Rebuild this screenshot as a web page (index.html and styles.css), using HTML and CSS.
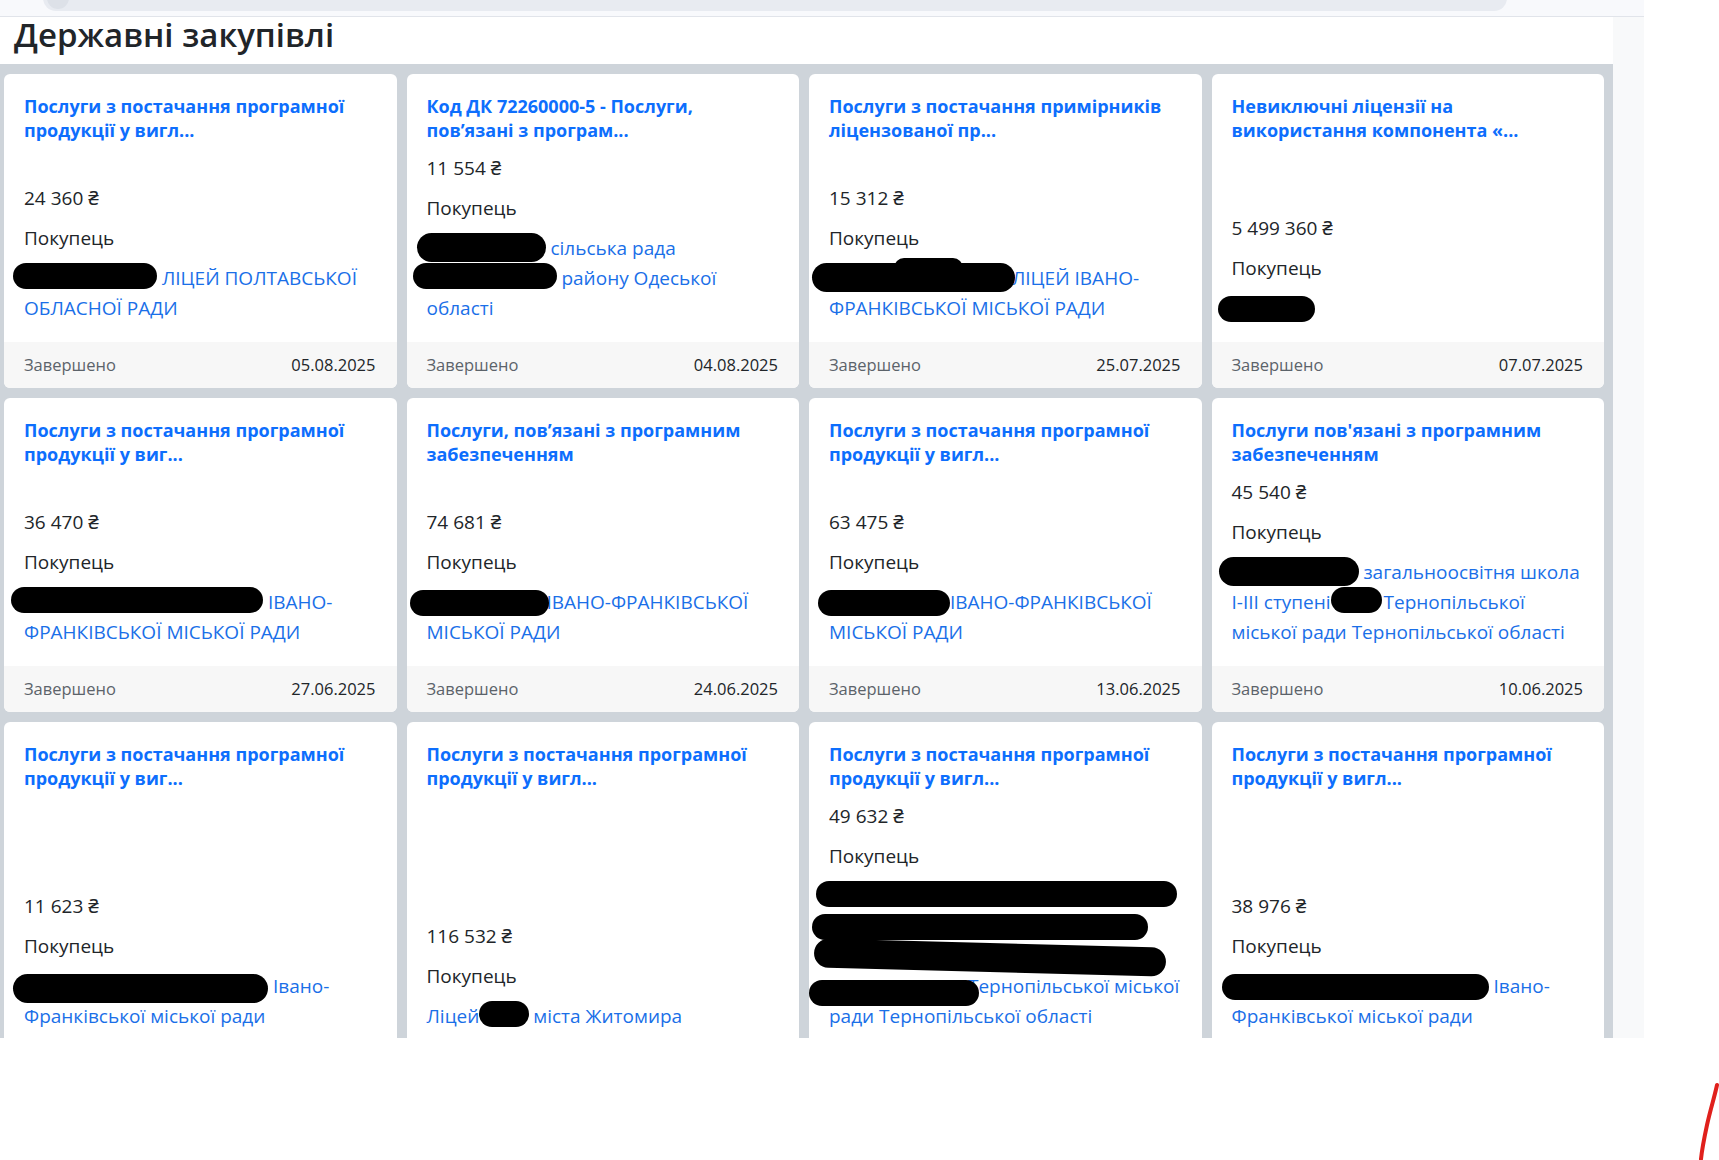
FILE: index.html
```html
<!DOCTYPE html>
<html lang="uk">
<head>
  <meta charset="UTF-8">
  <meta name="viewport" content="width=device-width, initial-scale=1.0">
  <title>Державні закупівлі</title>
  <link rel="stylesheet" href="styles.css">
</head>
<body>
  <div class="screen">
    <div class="topbar">
      <div class="search"><span class="search-btn"></span></div>
    </div>

    <div class="viewport">
      <main class="main">
        <h1 class="page-title">Державні закупівлі</h1>

        <div class="tenders">
          <!-- ряд 1 -->
          <article class="tender">
            <div class="tender-body">
              <a class="tender-title" href="#">Послуги з постачання програмної продукції у вигл...</a>
              <div class="tender-info">
                <p class="tender-amount">24&nbsp;360&nbsp;₴</p>
                <p class="tender-label">Покупець</p>
                <a class="tender-buyer" href="#"><span class="redact" style="width:144px;margin-left:-11px"></span> ЛІЦЕЙ ПОЛТАВСЬКОЇ ОБЛАСНОЇ РАДИ</a>
              </div>
            </div>
            <div class="tender-footer"><span class="status">Завершено</span><span>05.08.2025</span></div>
          </article>

          <article class="tender">
            <div class="tender-body">
              <a class="tender-title" href="#">Код ДК 72260000-5 - Послуги, пов’язані з програм...</a>
              <div class="tender-info">
                <p class="tender-amount">11&nbsp;554&nbsp;₴</p>
                <p class="tender-label">Покупець</p>
                <a class="tender-buyer" href="#"><span class="redact tall" style="width:129px;margin-left:-10px"></span> сільська рада <span class="redact" style="width:144px;margin-left:-14px"></span> району Одеської області</a>
              </div>
            </div>
            <div class="tender-footer"><span class="status">Завершено</span><span>04.08.2025</span></div>
          </article>

          <article class="tender">
            <div class="tender-body">
              <a class="tender-title" href="#">Послуги з постачання примірників ліцензованої пр...</a>
              <div class="tender-info">
                <p class="tender-amount">15&nbsp;312&nbsp;₴</p>
                <p class="tender-label">Покупець</p>
                <a class="tender-buyer" href="#"><span class="redact tall bump" style="width:203px;margin:0 -8px 0 -17px"></span> ЛІЦЕЙ ІВАНО-ФРАНКІВСЬКОЇ МІСЬКОЇ РАДИ</a>
              </div>
            </div>
            <div class="tender-footer"><span class="status">Завершено</span><span>25.07.2025</span></div>
          </article>

          <article class="tender">
            <div class="tender-body">
              <a class="tender-title" href="#">Невиключні ліцензії на використання компонента «...</a>
              <div class="tender-info">
                <p class="tender-amount">5&nbsp;499&nbsp;360&nbsp;₴</p>
                <p class="tender-label">Покупець</p>
                <a class="tender-buyer" href="#"><span class="redact down" style="width:97px;margin-left:-14px"></span></a>
              </div>
            </div>
            <div class="tender-footer"><span class="status">Завершено</span><span>07.07.2025</span></div>
          </article>

          <!-- ряд 2 -->
          <article class="tender">
            <div class="tender-body">
              <a class="tender-title" href="#">Послуги з постачання програмної продукції у виг...</a>
              <div class="tender-info">
                <p class="tender-amount">36&nbsp;470&nbsp;₴</p>
                <p class="tender-label">Покупець</p>
                <a class="tender-buyer" href="#"><span class="redact" style="width:252px;margin-left:-13px"></span> ІВАНО-ФРАНКІВСЬКОЇ МІСЬКОЇ РАДИ</a>
              </div>
            </div>
            <div class="tender-footer"><span class="status">Завершено</span><span>27.06.2025</span></div>
          </article>

          <article class="tender">
            <div class="tender-body">
              <a class="tender-title" href="#">Послуги, пов’язані з програмним забезпеченням</a>
              <div class="tender-info">
                <p class="tender-amount">74&nbsp;681&nbsp;₴</p>
                <p class="tender-label">Покупець</p>
                <a class="tender-buyer" href="#"><span class="redact down" style="width:139px;margin:0 -7px 0 -17px"></span> ІВАНО-ФРАНКІВСЬКОЇ МІСЬКОЇ РАДИ</a>
              </div>
            </div>
            <div class="tender-footer"><span class="status">Завершено</span><span>24.06.2025</span></div>
          </article>

          <article class="tender">
            <div class="tender-body">
              <a class="tender-title" href="#">Послуги з постачання програмної продукції у вигл...</a>
              <div class="tender-info">
                <p class="tender-amount">63&nbsp;475&nbsp;₴</p>
                <p class="tender-label">Покупець</p>
                <a class="tender-buyer" href="#"><span class="redact down" style="width:132px;margin:0 -5px 0 -11px"></span> ІВАНО-ФРАНКІВСЬКОЇ МІСЬКОЇ РАДИ</a>
              </div>
            </div>
            <div class="tender-footer"><span class="status">Завершено</span><span>13.06.2025</span></div>
          </article>

          <article class="tender">
            <div class="tender-body">
              <a class="tender-title" href="#">Послуги пов'язані з програмним забезпеченням</a>
              <div class="tender-info">
                <p class="tender-amount">45&nbsp;540&nbsp;₴</p>
                <p class="tender-label">Покупець</p>
                <a class="tender-buyer" href="#"><span class="redact tall" style="width:140px;margin-left:-13px"></span> загальноосвітня школа І-ІІІ ступені<span class="redact" style="width:51px;margin-right:-3px"></span> Тернопільської міської ради Тернопільської області</a>
              </div>
            </div>
            <div class="tender-footer"><span class="status">Завершено</span><span>10.06.2025</span></div>
          </article>

          <!-- ряд 3 -->
          <article class="tender">
            <div class="tender-body">
              <a class="tender-title" href="#">Послуги з постачання програмної продукції у виг...</a>
              <div class="tender-info">
                <p class="tender-amount">11&nbsp;623&nbsp;₴</p>
                <p class="tender-label">Покупець</p>
                <a class="tender-buyer" href="#"><span class="redact tall down" style="width:255px;margin-left:-11px"></span> Івано-Франківської міської ради</a>
              </div>
            </div>
          </article>

          <article class="tender">
            <div class="tender-body">
              <a class="tender-title" href="#">Послуги з постачання програмної продукції у вигл...</a>
              <div class="tender-info">
                <p class="tender-amount">116&nbsp;532&nbsp;₴</p>
                <p class="tender-label">Покупець</p>
                <a class="tender-buyer" href="#">Ліцей<span class="redact" style="width:50px;margin-right:-1px"></span> міста Житомира</a>
              </div>
            </div>
          </article>

          <article class="tender">
            <div class="tender-body">
              <a class="tender-title" href="#">Послуги з постачання програмної продукції у вигл...</a>
              <div class="tender-info">
                <p class="tender-amount">49&nbsp;632&nbsp;₴</p>
                <p class="tender-label">Покупець</p>
                <a class="tender-buyer" href="#"><span class="redact" style="width:361px;margin-left:-13px"></span> <span class="redact down" style="width:336px;margin-left:-17px"></span> <span class="redact tall down tilt" style="width:352px;margin-left:-15px"></span> <span class="redact down-more" style="width:170px;margin:0 -16px 0 -20px"></span> Тернопільської міської ради Тернопільської області</a>
              </div>
            </div>
          </article>

          <article class="tender">
            <div class="tender-body">
              <a class="tender-title" href="#">Послуги з постачання програмної продукції у вигл...</a>
              <div class="tender-info">
                <p class="tender-amount">38&nbsp;976&nbsp;₴</p>
                <p class="tender-label">Покупець</p>
                <a class="tender-buyer" href="#"><span class="redact down" style="width:267px;margin-left:-10px"></span> Івано-Франківської міської ради</a>
              </div>
            </div>
          </article>
        </div>
      </main>
      <div class="scroll-strip"></div>
    </div>

    <svg class="pen-mark" width="30" height="80" viewBox="0 0 30 80">
      <path d="M27 4 C 25 14, 20 30, 17 44 S 12 68, 11 78" fill="none" stroke="#e0201c" stroke-width="4" stroke-linecap="round"/>
    </svg>
  </div>
</body>
</html>
```

FILE: styles.css
```css
* {
  box-sizing: border-box;
}

body {
  margin: 0;
  background-color: #fff;
  font-family: "Open Sans", "Noto Sans", "DejaVu Sans", sans-serif;
  color: #212529;
}

.screen {
  position: relative;
  width: 1719px;
  height: 1160px;
  overflow: hidden;
}

/* Верхня панель (обрізана) */
.topbar {
  width: 1644px;
  height: 17px;
  background-color: #f8f9fc;
  border-bottom: 1px solid #e1e4ea;
  overflow: hidden;
}
.search {
  display: flex;
  align-items: center;
  width: 1464px;
  height: 26px;
  margin: -15px 0 0 43px;
  padding-left: 4px;
  border-radius: 13px;
  background-color: #e8ebf1;
}
.search-btn {
  width: 22px;
  height: 22px;
  border-radius: 50%;
  background-color: #dde1e8;
}

.viewport {
  display: flex;
  width: 1644px;
  height: 1021px;
}
.main {
  display: flex;
  flex-direction: column;
  width: 1613px;
  min-height: 0;
}
.scroll-strip {
  width: 31px;
  background-color: #f8f9fa;
}

.page-title {
  flex-shrink: 0;
  margin: 0;
  padding: 0 14px;
  height: 47px;
  font-size: 33px;
  font-weight: 600;
  line-height: 36px;
  color: #212529;
}

/* Сітка закупівель */
.tenders {
  flex: 1;
  min-height: 0;
  display: grid;
  grid-template-columns: repeat(4, 1fr);
  grid-auto-rows: max-content;
  align-content: start;
  gap: 10px;
  padding: 10px 9px 0 4px;
  background-color: #ced4da;
  overflow: hidden;
}
.tender {
  display: flex;
  flex-direction: column;
  background-color: #fff;
  border-radius: 6px;
}
.tender-body {
  flex: 1;
  display: flex;
  flex-direction: column;
  padding: 20px 20px 19px;
}
.tender-title {
  display: block;
  margin-bottom: 11px;
  font-size: 18px;
  font-weight: 700;
  line-height: 24px;
  color: #0d6efd;
  text-decoration: none;
}
.tender-info {
  margin-top: auto;
  font-size: 19px;
  line-height: 30px;
}
.tender-info p {
  margin: 0 0 10px;
}
.tender-buyer {
  color: #1a6fe8;
  text-decoration: none;
}
.tender-footer {
  display: flex;
  justify-content: space-between;
  padding: 10px 21px 10px 20px;
  background-color: #f7f7f7;
  border-radius: 0 0 6px 6px;
  font-size: 16.5px;
  line-height: 26px;
  color: #212529;
}
.status {
  color: #5c636a;
}

/* Замальовані маркером дані */
.redact {
  position: relative;
  z-index: 1;
  display: inline-block;
  height: 26px;
  border-radius: 13px;
  background-color: #000;
  vertical-align: -4px;
}
.redact.tall {
  height: 29px;
  border-radius: 15px;
  vertical-align: -7px;
}
.redact.down {
  transform: translateY(3px);
}
.redact.down-more {
  transform: translateY(9px);
}
.redact.tilt {
  transform: translateY(2px) rotate(1.5deg);
}
.redact.bump::before {
  content: '';
  position: absolute;
  left: 82px;
  top: -5px;
  width: 69px;
  height: 20px;
  border-radius: 10px;
  background-color: #000;
}

.pen-mark {
  position: absolute;
  left: 1690px;
  top: 1081px;
}
```
